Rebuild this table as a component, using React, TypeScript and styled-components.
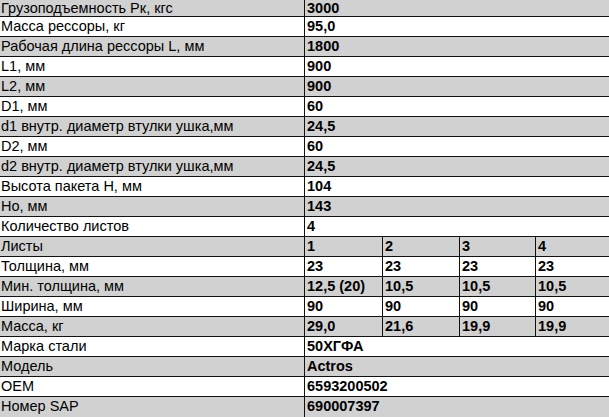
import React from "react";
import styled, { createGlobalStyle } from "styled-components";

const Global = createGlobalStyle`
  html, body { margin: 0; padding: 0; background: #fff; overflow: hidden; }
  body { font-family: "Liberation Sans", Arial, Helvetica, sans-serif; }
`;

const Table = styled.div`
  width: 609px;
  display: flex;
  flex-direction: column;
`;

const Row = styled.div<{ $shade: boolean; $split: boolean }>`
  display: grid;
  grid-template-columns: ${(p) => (p.$split ? "304px 78px 77px 76px 1fr" : "304px 1fr")};
  height: 19px;
  line-height: 19px;
  border-bottom: 1px solid #111;
  background: ${(p) => (p.$shade ? "#d1d1d1" : "#ffffff")};
  &:first-child { height: 16px; line-height: 16px; }
  &:last-child { border-bottom: none; height: 20px; }
`;

const Label = styled.div`
  font-size: 14.5px;
  color: #000;
  padding-left: 1px;
  white-space: nowrap;
  overflow: hidden;
`;

const Value = styled.div`
  font-size: 14.5px;
  font-weight: bold;
  color: #000;
  padding-left: 2px;
  border-left: 1px solid #111;
  white-space: nowrap;
  overflow: hidden;
`;

type R = { label: string; values: string[] };

const rows: R[] = [
  { label: "Грузоподъемность Pк, кгс", values: ["3000"] },
  { label: "Масса рессоры, кг", values: ["95,0"] },
  { label: "Рабочая длина рессоры L, мм", values: ["1800"] },
  { label: "L1, мм", values: ["900"] },
  { label: "L2, мм", values: ["900"] },
  { label: "D1, мм", values: ["60"] },
  { label: "d1 внутр. диаметр втулки ушка,мм", values: ["24,5"] },
  { label: "D2, мм", values: ["60"] },
  { label: "d2 внутр. диаметр втулки ушка,мм", values: ["24,5"] },
  { label: "Высота пакета H, мм", values: ["104"] },
  { label: "Но, мм", values: ["143"] },
  { label: "Количество листов", values: ["4"] },
  { label: "Листы", values: ["1", "2", "3", "4"] },
  { label: "Толщина, мм", values: ["23", "23", "23", "23"] },
  { label: "Мин. толщина, мм", values: ["12,5 (20)", "10,5", "10,5", "10,5"] },
  { label: "Ширина, мм", values: ["90", "90", "90", "90"] },
  { label: "Масса, кг", values: ["29,0", "21,6", "19,9", "19,9"] },
  { label: "Марка стали", values: ["50ХГФА"] },
  { label: "Модель", values: ["Actros"] },
  { label: "OEM", values: ["6593200502"] },
  { label: "Номер SAP", values: ["690007397"] },
];

export default function App() {
  return (
    <>
      <Global />
      <Table>
        {rows.map((r, i) => (
          <Row key={i} $shade={i % 2 === 0} $split={r.values.length > 1}>
            <Label>{r.label}</Label>
            {r.values.map((v, j) => (
              <Value key={j}>{v}</Value>
            ))}
          </Row>
        ))}
      </Table>
    </>
  );
}
